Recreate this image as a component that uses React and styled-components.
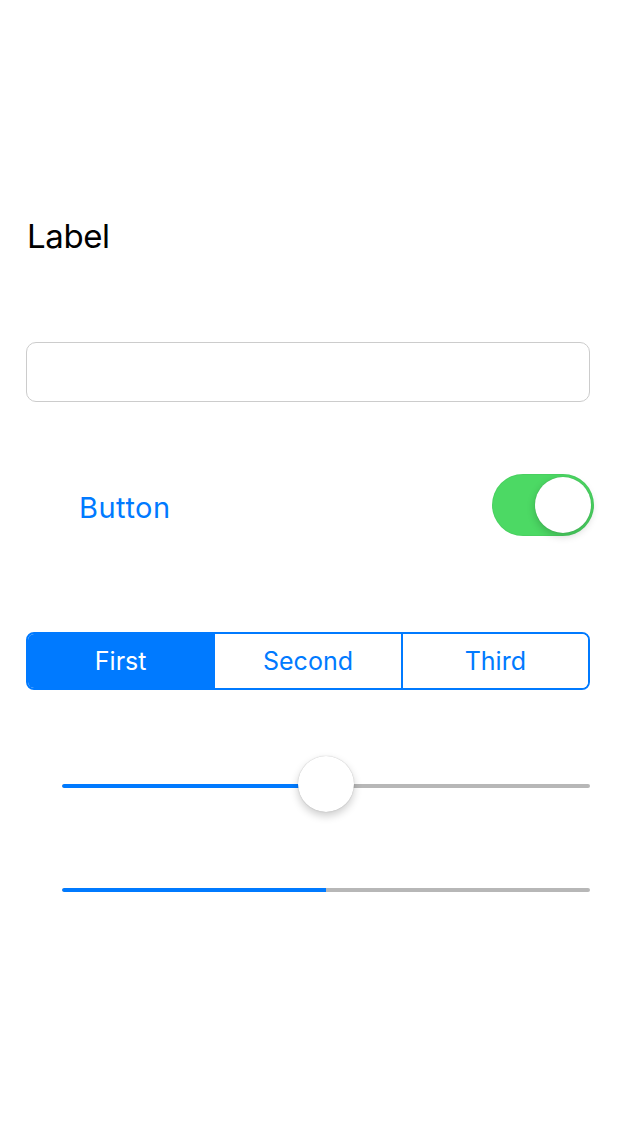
import React from "react";
import styled, { createGlobalStyle } from "styled-components";

const Global = createGlobalStyle`
  html, body { margin: 0; padding: 0; background: #ffffff; }
  body { font-family: Inter, "Noto Sans", "Liberation Sans", sans-serif; }
  * { box-sizing: border-box; }
`;

const Page = styled.div`
  width: 640px;
  height: 1136px;
  background: #fff;
  display: flex;
  flex-direction: column;
  padding: 216px 50px 0 26px;
`;

const Label = styled.div`
  font-size: 33px;
  line-height: 40px;
  height: 40px;
  letter-spacing: -0.4px;
  color: #000;
  padding-left: 1px;
`;

const TextField = styled.input`
  margin-top: 86px;
  width: 564px;
  height: 60px;
  border: 1px solid #cccccc;
  border-radius: 10px;
  outline: none;
  font-size: 28px;
  padding: 0 14px;
  font-family: inherit;
`;

const Row = styled.div`
  margin-top: 72px;
  width: 568px;
  height: 62px;
  display: flex;
  align-items: center;
  justify-content: space-between;
`;

const TextButton = styled.button`
  background: none;
  border: none;
  padding: 0;
  margin-left: 53px;
  margin-top: 4px;
  font-family: inherit;
  font-size: 29px;
  letter-spacing: 0.5px;
  color: #007aff;
  cursor: pointer;
`;

const SwitchTrack = styled.div`
  position: relative;
  width: 102px;
  height: 62px;
  border-radius: 31px;
  background: ${(p) => (p.$on ? "#4cd964" : "#e5e5ea")};
  box-shadow: inset 0 0 0 1px rgba(0, 0, 0, 0.04);
`;

const SwitchKnob = styled.div`
  position: absolute;
  top: 3px;
  ${(p) => (p.$on ? "right: 3px;" : "left: 3px;")}
  width: 56px;
  height: 56px;
  border-radius: 50%;
  background: #fff;
  box-shadow: 0 3px 8px rgba(0, 0, 0, 0.2), 0 0 1px rgba(0, 0, 0, 0.2);
`;

const Segmented = styled.div`
  margin-top: 96px;
  width: 564px;
  height: 58px;
  display: flex;
  border: 2px solid #007aff;
  border-radius: 8px;
  overflow: hidden;
`;

const Segment = styled.div`
  flex: 1;
  display: flex;
  align-items: center;
  justify-content: center;
  font-size: 25px;
  color: ${(p) => (p.$active ? "#fff" : "#007aff")};
  background: ${(p) => (p.$active ? "#007aff" : "#fff")};
  & + & {
    border-left: 2px solid #007aff;
  }
`;

const SliderWrap = styled.div`
  position: relative;
  margin-top: 68px;
  margin-left: 36px;
  width: 528px;
  height: 56px;
  display: flex;
  align-items: center;
`;

const Track = styled.div`
  position: relative;
  width: 100%;
  height: 4px;
  border-radius: 2px;
  background: #b7b7b7;
  overflow: hidden;
`;

const Fill = styled.div`
  height: 100%;
  background: #007aff;
  border-radius: 2px 0 0 2px;
`;

const SliderKnob = styled.div`
  position: absolute;
  top: -2px;
  width: 56px;
  height: 56px;
  margin-left: -28px;
  border-radius: 50%;
  background: #fff;
  box-shadow: 0 4px 8px rgba(0, 0, 0, 0.2), 0 0 1px rgba(0, 0, 0, 0.3);
`;

const ProgressWrap = styled.div`
  margin-top: 74px;
  margin-left: 36px;
  width: 528px;
`;

export default function App() {
  const slider = 0.5;
  const progress = 0.5;
  return (
    <>
      <Global />
      <Page>
        <Label>Label</Label>
        <TextField type="text" />
        <Row>
          <TextButton>Button</TextButton>
          <SwitchTrack $on>
            <SwitchKnob $on />
          </SwitchTrack>
        </Row>
        <Segmented>
          <Segment $active>First</Segment>
          <Segment>Second</Segment>
          <Segment>Third</Segment>
        </Segmented>
        <SliderWrap>
          <Track>
            <Fill style={{ width: `${slider * 100}%` }} />
          </Track>
          <SliderKnob style={{ left: `${slider * 100}%` }} />
        </SliderWrap>
        <ProgressWrap>
          <Track>
            <Fill style={{ width: `${progress * 100}%` }} />
          </Track>
        </ProgressWrap>
      </Page>
    </>
  );
}
